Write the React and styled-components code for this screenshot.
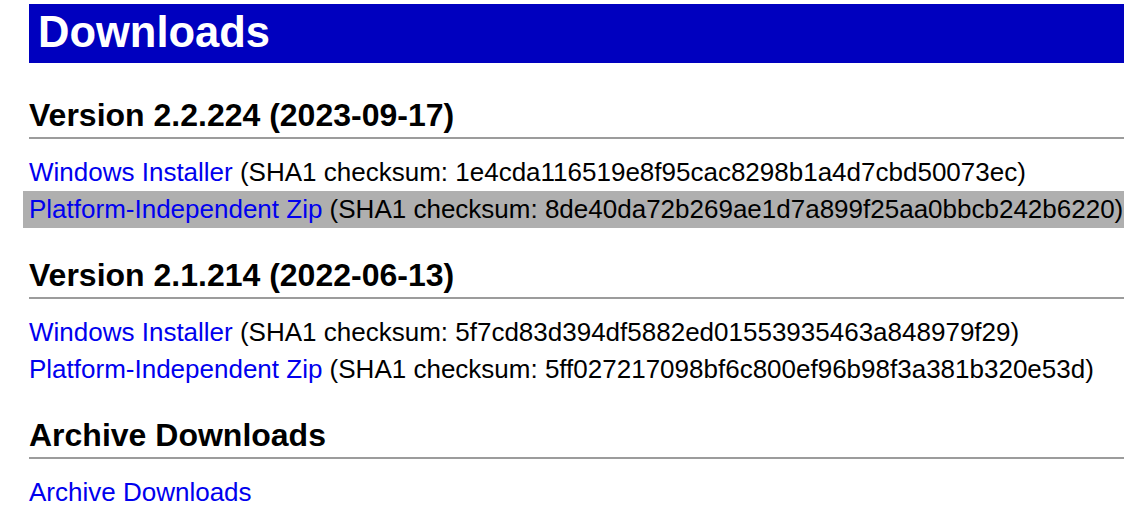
import React from "react";
import styled, { createGlobalStyle } from "styled-components";

const Global = createGlobalStyle`
  html, body { margin: 0; padding: 0; background: #ffffff; }
  body { font-family: "Liberation Sans", Arial, Helvetica, sans-serif; color: #000; }
`;

const Page = styled.div`
  padding: 4px 24px 0 29px;
`;

const Banner = styled.h1`
  margin: 0;
  height: 59px;
  padding-left: 9px;
  background: #0000bf;
  color: #ffffff;
  font-size: 43.5px;
  font-weight: bold;
  line-height: 57px;
`;

const SectionTitle = styled.h2`
  margin: ${(p) => (p.$first ? "34px" : "29px")} 0 0 0;
  padding-bottom: 4px;
  border-bottom: 2px solid #9c9c9c;
  font-size: 32px;
  font-weight: bold;
  line-height: 36px;
`;

const LinkList = styled.div`
  margin-top: 15px;
  display: flex;
  flex-direction: column;
  align-items: flex-start;
  font-size: 26px;
  line-height: 37px;
`;

const Row = styled.div`
  white-space: nowrap;
  margin-left: -6px;
  padding: 0 1px 0 6px;
  background: ${(p) => (p.$active ? "#afafaf" : "transparent")};
`;

const Link = styled.a`
  color: #0000ee;
  text-decoration: none;
`;

const versions = [
  {
    title: "Version 2.2.224 (2023-09-17)",
    rows: [
      { label: "Windows Installer", sum: "1e4cda116519e8f95cac8298b1a4d7cbd50073ec" },
      { label: "Platform-Independent Zip", sum: "8de40da72b269ae1d7a899f25aa0bbcb242b6220", active: true },
    ],
  },
  {
    title: "Version 2.1.214 (2022-06-13)",
    rows: [
      { label: "Windows Installer", sum: "5f7cd83d394df5882ed01553935463a848979f29" },
      { label: "Platform-Independent Zip", sum: "5ff027217098bf6c800ef96b98f3a381b320e53d" },
    ],
  },
];

export default function App() {
  return (
    <Page>
      <Global />
      <Banner>Downloads</Banner>
      {versions.map((v, i) => (
        <React.Fragment key={v.title}>
          <SectionTitle $first={i === 0}>{v.title}</SectionTitle>
          <LinkList>
            {v.rows.map((r) => (
              <Row key={r.label} $active={r.active}>
                <Link href="#">{r.label}</Link> (SHA1 checksum: {r.sum})
              </Row>
            ))}
          </LinkList>
        </React.Fragment>
      ))}
      <SectionTitle>Archive Downloads</SectionTitle>
      <LinkList>
        <Row>
          <Link href="#">Archive Downloads</Link>
        </Row>
      </LinkList>
    </Page>
  );
}
